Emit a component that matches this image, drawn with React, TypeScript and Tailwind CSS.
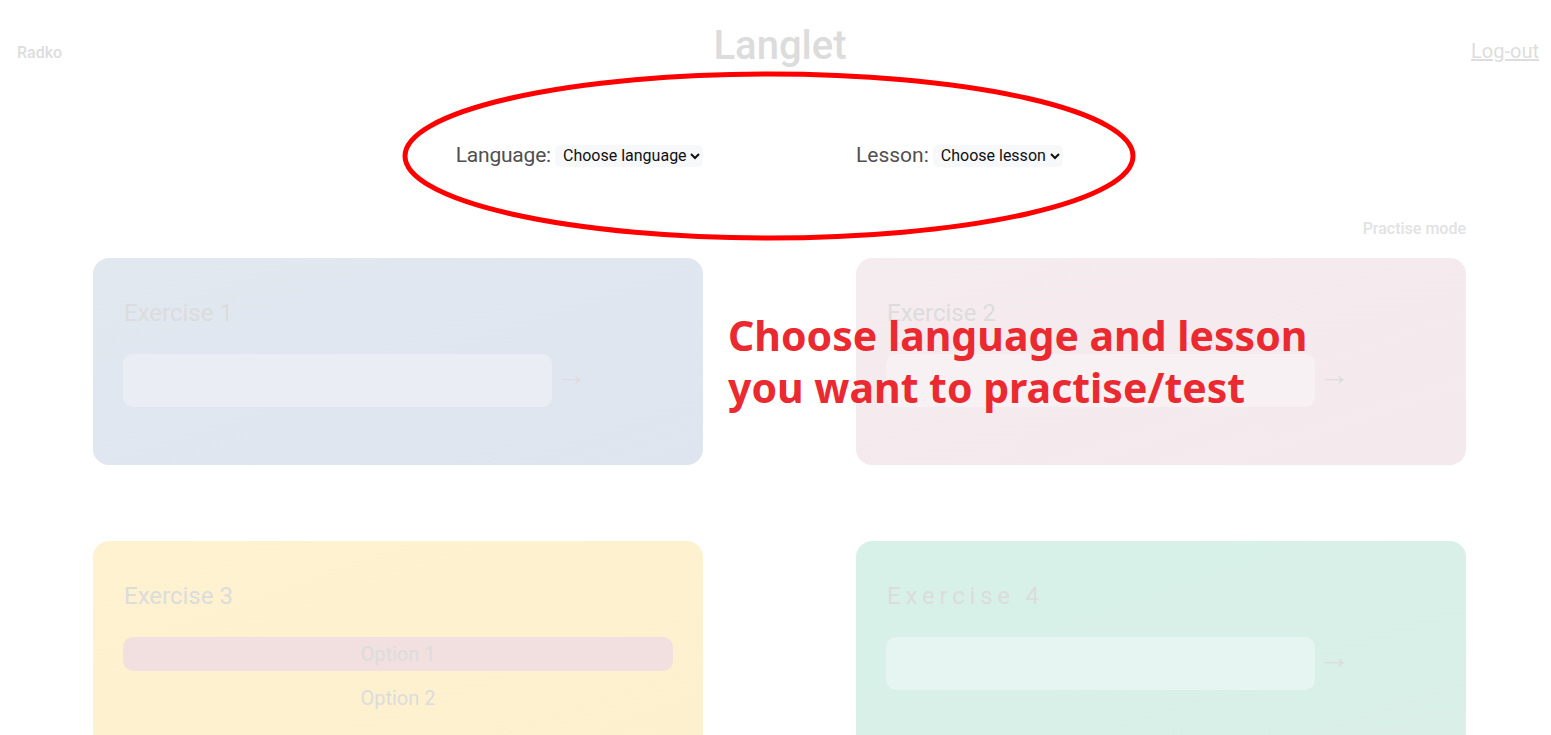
import React from "react";

const font = { fontFamily: "Roboto, 'Noto Sans', sans-serif" };

function Arrow() {
  return <span className="pb-[12px] text-[32px] leading-none text-[#dedcdc]">→</span>;
}

function InputCard({ title, bg, field, wide }: { title: string; bg: string; field: string; wide?: boolean }) {
  return (
    <div className={`h-[207px] rounded-[16px] px-[30px] pt-[30px] ${bg}`}>
      <h3
        className={`h-[50px] pl-px text-[24px] leading-[50px] text-[#dcdcdc] ${wide ? "tracking-[0.2em]" : ""}`}
      >
        {title}
      </h3>
      <div className="mt-[16px] flex items-center gap-[3px]">
        <div className={`h-[53px] w-[429px] rounded-[10px] ${field}`} />
        <Arrow />
      </div>
    </div>
  );
}

export default function App() {
  return (
    <div className="relative h-screen overflow-hidden bg-white" style={font}>
      {/* header */}
      <header className="grid grid-cols-[1fr_auto_1fr] pl-[17px] pr-[12px]">
        <div className="pt-[43px] text-[16px] font-medium leading-[20px] text-[#dddddd]">Radko</div>
        <h1 className="pl-[4px] pt-[22px] text-[40px] font-medium leading-[48px] text-[#dcdcdc]">Langlet</h1>
        <div className="pt-[39px] text-right">
          <a className="text-[20px] leading-[24px] text-[#dddddd] underline">Log-out</a>
        </div>
      </header>

      <div className="pl-[93px] pr-[85px]">
        {/* selects */}
        <div className="mt-[70px] grid grid-cols-2 gap-[153px]">
          <div className="flex items-center justify-end gap-[4px]">
            <span className="text-[21px] tracking-[-0.2px] text-[#505050]">Language:</span>
            <select className="h-[22px] rounded-[5px] bg-[#f7f8fa] pl-[4px] text-[16px] text-[#111]">
              <option>Choose language</option>
            </select>
          </div>
          <div className="flex items-center gap-[4px]">
            <span className="text-[21px] text-[#505050]">Lesson:</span>
            <select className="h-[22px] rounded-[5px] bg-[#f7f8fa] pl-[4px] text-[16px] text-[#111]">
              <option>Choose lesson</option>
            </select>
          </div>
        </div>

        <div className="mt-[47px] text-right text-[16px] font-medium leading-[20px] text-[#e2e2e2]">
          Practise mode
        </div>

        {/* exercises */}
        <div className="mt-[19px] grid grid-cols-2 gap-x-[153px] gap-y-[76px]">
          <InputCard title="Exercise 1" bg="bg-gradient-to-br from-[#e2e8f0] to-[#dfe5ef]" field="bg-[#eaeef4]" />
          <InputCard title="Exercise 2" bg="bg-gradient-to-br from-[#f5ecef] to-[#f4e9ed]" field="bg-[#f7f1f3]" />
          <div className="h-[207px] rounded-[16px] bg-gradient-to-br from-[#fef2d0] to-[#fdf0cf] px-[30px] pt-[30px]">
            <h3 className="h-[50px] pl-px text-[24px] leading-[50px] text-[#dcdcdc]">Exercise 3</h3>
            <div className="mt-[16px] flex flex-col">
              <div className="h-[34px] rounded-[10px] bg-[#f2e0e0] text-center text-[20px] leading-[34px] text-[#dcdcdc]">
                Option 1
              </div>
              <div className="mt-[10px] text-center text-[20px] leading-[34px] text-[#dcdcdc]">Option 2</div>
            </div>
          </div>
          <InputCard title="Exercise 4" bg="bg-gradient-to-br from-[#d7f1e8] to-[#d9efe8]" field="bg-[#e6f5f1]" wide />
        </div>
      </div>

      {/* annotation ellipse */}
      <svg className="absolute left-[401px] top-[70px]" width="736" height="172" viewBox="0 0 736 172">
        <ellipse cx="368" cy="86" rx="364" ry="82" fill="none" stroke="#ff0000" strokeWidth="5" />
      </svg>

      {/* annotation text */}
      <p
        className="absolute left-[728px] top-[309px] text-[41px] font-bold leading-[52px] text-[#ea2a30]"
        style={{ fontFamily: "'Noto Sans', 'Open Sans', sans-serif" }}
      >
        Choose language and lesson
        <br />
        you want to practise/test
      </p>
    </div>
  );
}
